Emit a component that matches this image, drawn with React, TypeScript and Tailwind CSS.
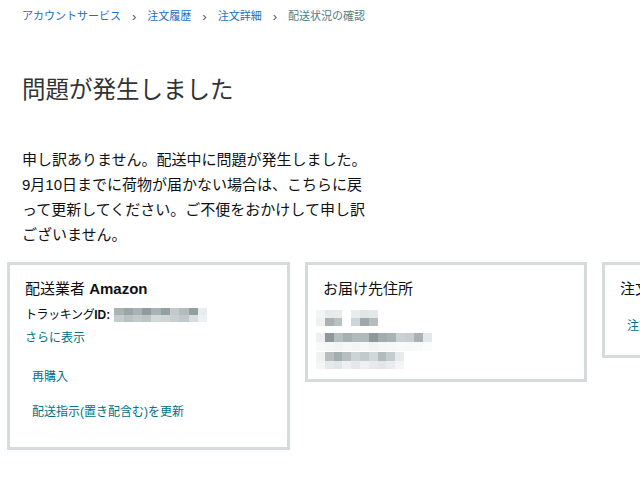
import React from 'react';

// Pixelated blocks standing in for masked personal data
const Blur = ({ rows, w = 9, h = 7 }: { rows: string[][]; w?: number; h?: number }) => (
  <div className="flex flex-col">
    {rows.map((row, i) => (
      <div key={i} className="flex">
        {row.map((c, j) => (
          <div key={j} style={{ width: w, height: h, backgroundColor: c }} />
        ))}
      </div>
    ))}
  </div>
);

const trackingRows = [
  ['#a9b3b4', '#9aa5a6', '#a8b1b3', '#8f9b9c', '#a9b3b5', '#94a1a3', '#c4cacb', '#b3bbbc', '#939e9f', '#e8ecec'],
  ['#c5cccd', '#b9c1c2', '#c2c9ca', '#bcc4c5', '#d3d9d9', '#cfd5d6', '#c9cfd0', '#c1c8c9', '#d7dcdc', '#eef1f1'],
];

const nameRows = [
  ['#f3f5f5', '#e6eaea', '#e8ecec', '#ffffff', '#e9ecec', '#e0e5e6', '#e4e8e8'],
  ['#f0f2f2', '#a8b1b3', '#b8c0c1', '#ffffff', '#d0d5d6', '#9ea9ab', '#b4bcbe'],
];

const streetRows = [
  ['#eef0f0', '#8c989a', '#b5bdbe', '#a6b0b2', '#b1babb', '#b1babb', '#8c989a', '#a3adaf', '#a9b2b4', '#ccd2d3', '#c8ced0', '#a8b2b3', '#e3e8e9', '#ffffff'],
  ['#f8f9f9', '#f5f7f7', '#f3f5f5', '#f6f8f8', '#f4f6f6', '#f7f8f8', '#f2f4f4', '#f5f7f7', '#f6f8f8', '#f8f9f9', '#f7f8f8', '#f8f9f9', '#fbfcfc', '#ffffff'],
];

const cityRows = [
  ['#f0f2f2', '#b6bec0', '#a4aeb0', '#b6bec0', '#ced3d5', '#c3cacb', '#d2d7d8', '#b3bcbd', '#c6cdcf', '#e6eaea', '#ffffff'],
  ['#f4f6f6', '#e5e9e9', '#e0e5e6', '#edf0f0', '#e4e8e9', '#eef1f1', '#e6eaea', '#e2e6e7', '#e9eced', '#f3f5f5', '#ffffff'],
];

const crumbs = ['アカウントサービス', '注文履歴', '注文詳細'];

export default function App() {
  return (
    <div className="w-[640px] h-[480px] overflow-hidden bg-white text-[#0f1111] font-['Liberation_Sans','Noto_Sans_CJK_JP',sans-serif]">
      <nav className="flex items-center h-[15px] mt-[9px] pl-[22px] text-[11px] leading-[15px]">
        {crumbs.map((c) => (
          <React.Fragment key={c}>
            <span className="text-[#1a6fc4]">{c}</span>
            <span className="mx-[11px] text-[13px] text-[#555]">›</span>
          </React.Fragment>
        ))}
        <span className="text-[#4e8088]">配送状況の確認</span>
      </nav>

      <h1 className="mt-[51px] pl-[22px] text-[23.5px] leading-[30px] font-normal text-[#333]">
        問題が発生しました
      </h1>

      <p className="mt-[42px] pl-[22px] text-[15px] leading-[25px] whitespace-nowrap">
        申し訳ありません。配送中に問題が発生しました。
        <br />
        9月10日までに荷物が届かない場合は、こちらに戻
        <br />
        って更新してください。ご不便をおかけして申し訳
        <br />
        ございません。
      </p>

      <div className="flex items-start gap-[15px] mt-[15px] pl-[7px]">
        <div className="w-[283px] shrink-0 border-[3px] border-[#d5dbdb] px-[15px] pt-[14px] pb-[26px]">
          <h2 className="text-[15px] leading-[20px]">
            配送業者 <span className="font-bold">Amazon</span>
          </h2>
          <div className="mt-[7px] flex items-center text-[12px] leading-[18px]">
            <span className="tracking-[-0.4px]">トラッキング</span>
            <span className="font-bold">ID:</span>
            <div className="ml-[4px]">
              <Blur rows={trackingRows} w={9.3} />
            </div>
          </div>
          <div className="mt-[5px] text-[12px] leading-[18px] text-[#007185]">さらに表示</div>
          <div className="mt-[21px] pl-[7px] text-[12px] leading-[18px] text-[#007185]">再購入</div>
          <div className="mt-[17px] pl-[7px] text-[12px] leading-[18px] text-[#007185]">
            配送指示(置き配含む)を更新
          </div>
        </div>

        <div className="w-[282px] shrink-0 border-[3px] border-[#d5dbdb] px-[15px] pt-[14px] pb-[10px]">
          <h2 className="text-[15px] leading-[20px]">お届け先住所</h2>
          <div className="-ml-[7px]">
            <div className="mt-[11px]">
              <Blur rows={nameRows} w={8.8} h={8} />
            </div>
            <div className="mt-[7px]">
              <Blur rows={streetRows} w={8.9} h={9} />
            </div>
            <div className="mt-[1px]">
              <Blur rows={cityRows} w={8.8} h={8.5} />
            </div>
          </div>
        </div>

        <div className="w-[283px] shrink-0 border-[3px] border-[#d5dbdb] px-[15px] pt-[14px] pb-[20px]">
          <h2 className="text-[15px] leading-[20px]">注文の概要</h2>
          <div className="mt-[18px] pl-[7px] text-[12px] leading-[18px] text-[#007185]">注文の詳細を表示</div>
        </div>
      </div>
    </div>
  );
}
